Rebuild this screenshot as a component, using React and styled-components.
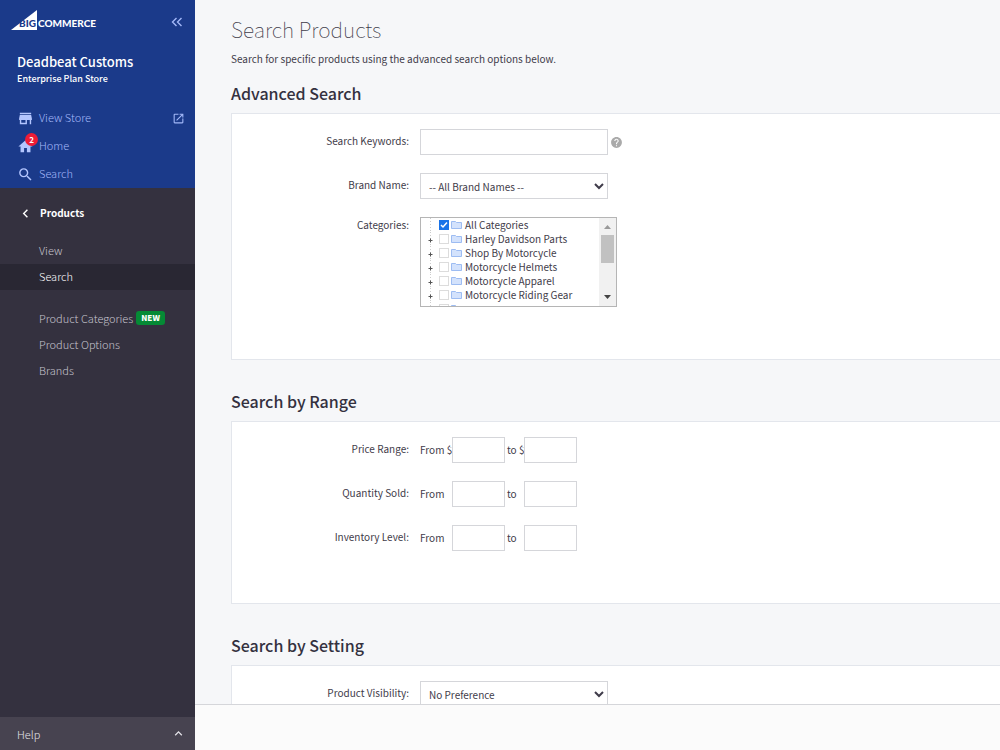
import React from 'react';
import styled, { createGlobalStyle } from 'styled-components';
import {
  MdStore,
  MdHome,
  MdSearch,
  MdOpenInNew,
  MdChevronLeft,
  MdExpandLess,
  MdHelp,
} from 'react-icons/md';

const GlobalStyle = createGlobalStyle`
  * {
    box-sizing: border-box;
  }
  body {
    margin: 0;
    background: #f6f7f9;
    color: #3f3c4a;
    font-family: 'Noto Sans CJK SC', 'Noto Sans', sans-serif;
    font-size: 10px;
    line-height: 16px;
  }
  button, input, select {
    font: inherit;
    color: inherit;
  }
`;

const Page = styled.div`
  display: flex;
  height: 100vh;
  overflow: hidden;
`;

const Sidebar = styled.aside`
  display: flex;
  flex-direction: column;
  flex: none;
  width: 195px;
  background: #34313f;
`;

const StorePanel = styled.div`
  height: 188px;
  background: #1b3a8a;
  color: #b4c6ff;
`;

const Brand = styled.div`
  display: flex;
  align-items: flex-start;
  justify-content: space-between;
  height: 52px;
  padding: 10px 12px 0 11px;
`;

const Logo = styled.svg`
  display: block;
  font-family: Lato, sans-serif;
  font-weight: 700;
`;

const IconButton = styled.button`
  display: flex;
  align-items: center;
  height: 24px;
  padding: 0;
  border: 0;
  background: none;
  color: #a3b8f8;
`;

const StoreName = styled.div`
  padding-left: 17px;
  color: #fff;
  font-size: 13px;
  font-weight: 500;
  line-height: 20px;
`;

const StorePlan = styled.div`
  height: 32px;
  padding-left: 17px;
  color: #fff;
  font-size: 9px;
  font-weight: 500;
  line-height: 14px;
`;

const TopLink = styled.a`
  display: flex;
  align-items: center;
  height: 28px;
  padding: 0 10px 0 17px;
  color: #a3b8f8;
  font-size: 11px;
  font-weight: 300;
  text-decoration: none;

  > svg:last-child {
    margin-left: auto;
  }
`;

const LinkText = styled.span`
  padding-bottom: 2px;
`;

const IconSlot = styled.span`
  position: relative;
  display: flex;
  width: 22px;
  color: #b4c6ff;
`;

const Badge = styled.span`
  position: absolute;
  top: -5px;
  left: 8px;
  width: 13px;
  height: 13px;
  border-radius: 50%;
  background: #ee1c36;
  color: #fff;
  font-size: 8px;
  font-weight: 700;
  line-height: 13px;
  text-align: center;
`;

const SectionButton = styled.button`
  display: flex;
  align-items: center;
  height: 50px;
  padding: 0 17px;
  border: 0;
  background: none;
  color: #fff;
  font-size: 10px;
  font-weight: 700;

  svg {
    margin-right: 6px;
  }
`;

const SubNav = styled.nav`
  display: flex;
  flex-direction: column;
  margin-bottom: 16px;
`;

const SubLink = styled.a`
  display: flex;
  align-items: center;
  height: 26px;
  padding: 0 0 2px 39px;
  background: ${({ $active }) => ($active ? '#292733' : 'transparent')};
  color: ${({ $active }) => ($active ? '#fff' : '#c6c4ce')};
  font-size: 11px;
  font-weight: 300;
  text-decoration: none;
`;

const NewTag = styled.span`
  margin-left: 3px;
  padding: 0 5px;
  border-radius: 3px;
  background: #058a35;
  color: #fff;
  font-size: 8px;
  font-weight: 900;
  line-height: 14px;
`;

const HelpButton = styled.button`
  display: flex;
  align-items: center;
  justify-content: space-between;
  height: 33px;
  margin-top: auto;
  padding: 0 9px 0 17px;
  border: 0;
  background: #474350;
  color: #e4e3e8;
  font-size: 11px;
  font-weight: 300;
`;

const Main = styled.main`
  display: flex;
  flex: 1;
  flex-direction: column;
  min-width: 0;
`;

const Content = styled.div`
  flex: 1;
  min-height: 0;
  overflow: hidden;
  padding: 13px 0 0 36px;
`;

const Title = styled.h1`
  margin: 0 0 5px;
  font-size: 21px;
  font-weight: 100;
  line-height: 32px;
`;

const Intro = styled.p`
  margin: 0 0 13px;
  line-height: 18px;
`;

const Heading = styled.h2`
  margin: 0 0 8px;
  color: #34313f;
  font-size: 16px;
  font-weight: 500;
  line-height: 24px;
`;

const Panel = styled.section`
  display: flex;
  flex-direction: column;
  gap: 18px;
  margin-bottom: 29px;
  padding: 15px 0 52px;
  border: 1px solid #e3e6ec;
  border-right: 0;
  background: #fff;
`;

const Field = styled.div`
  display: grid;
  grid-template-columns: 177px 1fr;
  column-gap: 11px;
`;

const Label = styled.label`
  padding-top: ${({ $top }) => ($top ? '0' : '4px')};
  text-align: right;
`;

const Controls = styled.div`
  display: flex;
  align-items: center;
`;

const TextInput = styled.input`
  width: ${({ $small }) => ($small ? '53px' : '188px')};
  height: 26px;
  padding: 0 8px;
  border: 1px solid #d5d6da;
  background: #fff;
`;

const Select = styled.select`
  width: 188px;
  height: 26px;
  padding: 0 0 0 4px;
  border: 1px solid #d5d6da;
  border-radius: 0;
  background: #fff;
`;

const HelpIcon = styled(MdHelp)`
  margin-left: 2px;
  color: #aaa;
`;

const RangeText = styled.span`
  width: ${({ $wide }) => ($wide ? '32px' : '19px')};
  padding-left: ${({ $wide }) => ($wide ? '0' : '2px')};
  white-space: nowrap;
`;

const Tree = styled.div`
  display: flex;
  width: 197px;
  height: 90px;
  overflow: hidden;
  border: 1px solid #b5b5b5;
`;

const TreeList = styled.ul`
  flex: 1;
  margin: 0;
  padding: 0 0 0 5px;
  list-style: none;
`;

const TreeItem = styled.li`
  display: flex;
  align-items: center;
  height: 14px;
  line-height: 14px;
  white-space: nowrap;
`;

const Branch = styled.svg`
  flex: none;
  margin-right: 4px;
`;

const TreeCheck = styled.input`
  appearance: none;
  flex: none;
  width: 10px;
  height: 10px;
  margin: 0 2px 0 0;
  border: 1px solid #dcdcdc;
  background: #fff;

  &:checked {
    border-color: #1a73e8;
    background: #1a73e8;
  }
`;

const CheckBox = styled.span`
  position: relative;
  display: flex;
`;

const Tick = styled.svg`
  position: absolute;
  top: 0;
  left: 0;
  pointer-events: none;
`;

const Folder = styled.svg`
  flex: none;
  margin-right: 3px;
`;

const ScrollTrack = styled.div`
  display: flex;
  flex-direction: column;
  align-items: center;
  width: 17px;
  padding: 6px 0;
  background: #f1f1f1;
`;

const ScrollThumb = styled.div`
  width: 13px;
  height: 28px;
  margin: 5px 0 auto;
  background: #c1c1c1;
`;

const Footer = styled.footer`
  flex: none;
  height: 46px;
  border-top: 1px solid #d5d6da;
  background: #fbfbfb;
`;

const categories = [
  'All Categories',
  'Harley Davidson Parts',
  'Shop By Motorcycle',
  'Motorcycle Helmets',
  'Motorcycle Apparel',
  'Motorcycle Riding Gear',
  '',
];

const BigCommerceLogo = () => (
  <Logo width="92" height="22" viewBox="0 0 92 22" role="img" aria-label="BigCommerce">
    <path d="M0 20 26 0V20Z" fill="#fff" />
    <text x="8" y="17" fontSize="10" fontWeight="900" fill="#1b3a8a">BIG</text>
    <text x="27" y="17" fontSize="10" fontWeight="900" fill="#fff">COMMERCE</text>
  </Logo>
);

const CollapseIcon = () => (
  <svg width="12" height="12" viewBox="0 0 12 12" fill="none" stroke="currentColor" strokeWidth="1.4">
    <path d="M5.5 2 1.5 6l4 4M10.5 2l-4 4 4 4" />
  </svg>
);

function CategoryTree() {
  return (
    <Tree>
      <TreeList>
        {categories.map((name, index) => (
          <TreeItem key={name}>
            <Branch width="9" height="14" viewBox="0 0 9 14">
              <path d="M4.5 0V14" stroke="#ccc" strokeDasharray="1 2" />
              {index > 0 && <path d="M2.5 8.5H6.5M4.5 6.5V10.5" stroke="#555" />}
            </Branch>
            <CheckBox>
              <TreeCheck type="checkbox" id={`cat-${index}`} defaultChecked={index === 0} />
              {index === 0 && (
                <Tick width="10" height="10" viewBox="0 0 10 10">
                  <path d="M2 5l2 2 4-4.5" fill="none" stroke="#fff" strokeWidth="1.5" />
                </Tick>
              )}
            </CheckBox>
            <Folder width="11" height="10" viewBox="0 0 11 10">
              <path d="M.5 1.5h4l1 1h5v6H.5z" fill="#d3e2fc" stroke="#9dbcf2" />
            </Folder>
            <label htmlFor={`cat-${index}`}>{name}</label>
          </TreeItem>
        ))}
      </TreeList>
      <ScrollTrack>
        <svg width="7" height="6" viewBox="0 0 7 6"><path d="M0 5 3.5 1 7 5z" fill="#999" /></svg>
        <ScrollThumb />
        <svg width="7" height="6" viewBox="0 0 7 6"><path d="M0 1 3.5 5 7 1z" fill="#444" /></svg>
      </ScrollTrack>
    </Tree>
  );
}

function RangeField({ id, label, currency = '' }) {
  return (
    <Field>
      <Label htmlFor={`${id}-from`}>{label}</Label>
      <Controls>
        <RangeText $wide>From {currency}</RangeText>
        <TextInput $small id={`${id}-from`} />
        <RangeText>to {currency}</RangeText>
        <TextInput $small id={`${id}-to`} aria-label={`${label} to`} />
      </Controls>
    </Field>
  );
}

function App() {
  return (
    <Page>
      <GlobalStyle />
      <Sidebar>
        <StorePanel>
          <Brand>
            <BigCommerceLogo />
            <IconButton aria-label="Collapse menu"><CollapseIcon /></IconButton>
          </Brand>
          <StoreName>Deadbeat Customs</StoreName>
          <StorePlan>Enterprise Plan Store</StorePlan>
          <TopLink href="#store">
            <IconSlot><MdStore size={17} /></IconSlot>
            <LinkText>View Store</LinkText>
            <MdOpenInNew size={13} />
          </TopLink>
          <TopLink href="#home">
            <IconSlot>
              <MdHome size={17} />
              <Badge>2</Badge>
            </IconSlot>
            <LinkText>Home</LinkText>
          </TopLink>
          <TopLink href="#search">
            <IconSlot><MdSearch size={17} /></IconSlot>
            <LinkText>Search</LinkText>
          </TopLink>
        </StorePanel>
        <SectionButton><MdChevronLeft size={17} />Products</SectionButton>
        <SubNav>
          <SubLink href="#view">View</SubLink>
          <SubLink href="#product-search" $active>Search</SubLink>
        </SubNav>
        <SubNav>
          <SubLink href="#categories">Product Categories<NewTag>NEW</NewTag></SubLink>
          <SubLink href="#options">Product Options</SubLink>
          <SubLink href="#brands">Brands</SubLink>
        </SubNav>
        <HelpButton>Help<MdExpandLess size={15} /></HelpButton>
      </Sidebar>
      <Main>
        <Content>
          <Title>Search Products</Title>
          <Intro>Search for specific products using the advanced search options below.</Intro>

          <Heading>Advanced Search</Heading>
          <Panel>
            <Field>
              <Label htmlFor="keywords">Search Keywords:</Label>
              <Controls>
                <TextInput id="keywords" />
                <HelpIcon size={13} />
              </Controls>
            </Field>
            <Field>
              <Label htmlFor="brand">Brand Name:</Label>
              <Select id="brand"><option>-- All Brand Names --</option></Select>
            </Field>
            <Field>
              <Label as="span" $top>Categories:</Label>
              <CategoryTree />
            </Field>
          </Panel>

          <Heading>Search by Range</Heading>
          <Panel>
            <RangeField id="price" label="Price Range:" currency="$" />
            <RangeField id="sold" label="Quantity Sold:" />
            <RangeField id="inventory" label="Inventory Level:" />
          </Panel>

          <Heading>Search by Setting</Heading>
          <Panel>
            <Field>
              <Label htmlFor="visibility">Product Visibility:</Label>
              <Select id="visibility"><option>No Preference</option></Select>
            </Field>
          </Panel>
        </Content>
        <Footer />
      </Main>
    </Page>
  );
}

export default App;
